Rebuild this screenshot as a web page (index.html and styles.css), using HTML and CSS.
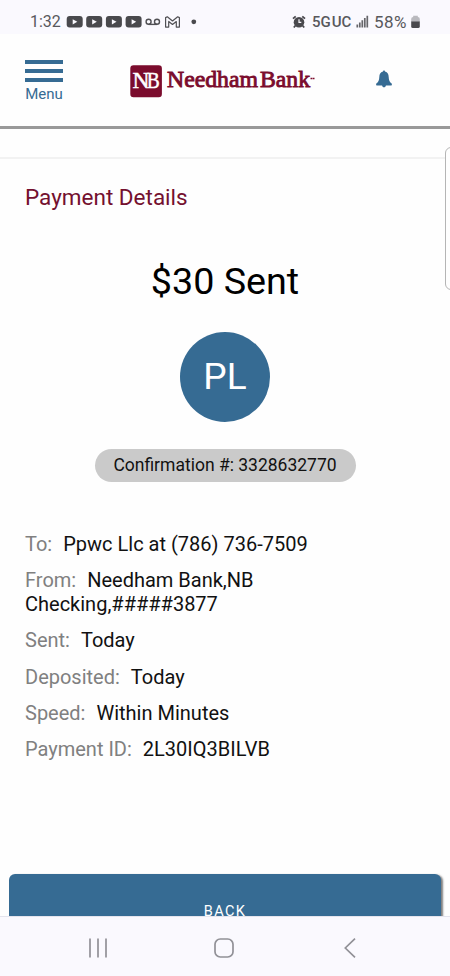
FILE: index.html
```html
<!DOCTYPE html>
<html lang="en">
<head>
  <meta charset="UTF-8" />
  <meta name="viewport" content="width=device-width, initial-scale=1" />
  <title>Payment Details</title>
  <link rel="stylesheet" href="styles.css">
</head>
<body>
  <div class="status-bar">
    <span class="clock">1:32</span>
    <svg class="notifications" width="132" height="14" viewBox="0 0 132 14">
      <defs>
        <g id="video">
          <rect width="16" height="11.6" rx="3" fill="#49494d" />
          <path d="M6 3.2l4.6 2.6L6 8.4z" fill="#faf9fe" />
        </g>
      </defs>
      <use href="#video" x="0.7" y="1" />
      <use href="#video" x="20.2" y="1" />
      <use href="#video" x="39.9" y="1" />
      <use href="#video" x="59.6" y="1" />
      <g fill="none" stroke="#505054" stroke-width="1.4">
        <circle cx="82.6" cy="6.8" r="2.5" />
        <circle cx="91" cy="6.8" r="2.5" />
        <path d="M82.6 9.4H91" />
        <path d="M99.6 12.1V2.6L101.3 1.8L106.5 6L111.7 1.8L113.4 2.6V12.1H110.3V6.5L106.5 9.4L102.7 6.5V12.1Z" stroke-width="1.2" stroke-linejoin="round" />
      </g>
      <circle cx="127.8" cy="6.8" r="2.4" fill="#49494d" />
    </svg>
    <svg class="alarm" width="14" height="14" viewBox="0 0 14 14">
      <path d="M1 3.7L3.7 1.3M10.3 1.3L13 3.7M3.5 10.5L1.8 12.5M10.5 10.5L12.2 12.5" stroke="#49494d" stroke-width="1.8" />
      <circle cx="7" cy="7.2" r="5.3" fill="#49494d" />
      <path d="M7 4.2V7.3H9.3" fill="none" stroke="#faf9fe" stroke-width="1.2" />
    </svg>
    <span class="network">5G<span>UC</span></span>
    <svg class="signal" width="13" height="13" viewBox="0 0 13 13">
      <path d="M1.3 12.5V9.6M3.8 12.5V7.5M6.3 12.5V5.2M8.8 12.5V3M11.3 12.5V.7" stroke="#66666a" stroke-width="1.7" />
    </svg>
    <span class="percent">58%</span>
    <svg class="battery" width="9" height="14" viewBox="0 0 9 14">
      <path d="M2.2 2V.8H6.8V2Q8.8 2 8.8 4V7H.2V4Q.2 2 2.2 2Z" fill="#b9b9be" />
      <path d="M.2 6.5H8.8V11.4Q8.8 13 7.2 13H1.8Q.2 13 .2 11.4Z" fill="#49494d" />
    </svg>
  </div>

  <header class="header">
    <div class="menu">
      <div class="menu-lines"><i></i><i></i><i></i></div>
      <span>Menu</span>
    </div>
    <svg class="logo" width="188" height="36" viewBox="0 0 188 36">
      <rect x="1.3" y="2.2" width="31.6" height="32" rx="3.2" fill="#7b0c2d" />
      <g font-family="'Liberation Serif', serif">
        <g fill="#fff" stroke="#fff" stroke-width=".5" font-size="23">
          <text x="3.6" y="24.8" textLength="17" lengthAdjust="spacingAndGlyphs">N</text>
          <text x="17.8" y="24.8" textLength="13" lengthAdjust="spacingAndGlyphs">B</text>
        </g>
        <g fill="#7b0c2d" stroke="#7b0c2d" stroke-width=".9" font-size="24">
          <text x="38" y="24.4" textLength="91" lengthAdjust="spacingAndGlyphs">Needham</text>
          <text x="131" y="24.4" textLength="50" lengthAdjust="spacingAndGlyphs">Bank</text>
        </g>
      </g>
      <path d="M181.5 15.6H185.5" stroke="#7b0c2d" stroke-width="1.5" stroke-dasharray="1.8 .4" />
    </svg>
    <svg class="bell" width="18" height="18" viewBox="0 0 18 18">
      <path d="M9 .4C9.7.4 10 .9 10 1.6C12.7 2.2 13.6 4.4 13.7 7C13.8 10.2 14.5 11.8 16.4 13.3C17.2 14 17 15.4 16.2 15.4H1.8C1 15.4.8 14 1.6 13.3C3.5 11.8 4.2 10.2 4.3 7C4.4 4.4 5.3 2.2 8 1.6C8 .9 8.3.4 9 .4ZM7 15H11C10.8 18.1 7.2 18.1 7 15Z" fill="#366b93" />
    </svg>
  </header>

  <main class="content">
    <div class="edge-handle"></div>
    <section class="details">
      <h1>Payment Details</h1>
      <p class="amount">$30 Sent</p>
      <div class="avatar">PL</div>
      <div class="confirmation">Confirmation #: 3328632770</div>
      <ul class="info">
        <li><span>To:</span>Ppwc Llc at (786) 736-7509</li>
        <li><span>From:</span>Needham Bank,NB<br>Checking,#####3877</li>
        <li><span>Sent:</span>Today</li>
        <li><span>Deposited:</span>Today</li>
        <li><span>Speed:</span>Within Minutes</li>
        <li><span>Payment ID:</span>2L30IQ3BILVB</li>
      </ul>
    </section>
    <button class="back">BACK</button>
  </main>

  <nav class="nav-bar">
    <svg width="20" height="20" viewBox="0 0 20 20">
      <path d="M2 .5V19.5M10 .5V19.5M18 .5V19.5" stroke="#919197" stroke-width="1.7" />
    </svg>
    <svg width="20" height="20" viewBox="0 0 20 20">
      <rect x="1" y="1" width="18" height="18" rx="5.3" fill="none" stroke="#919197" stroke-width="1.7" />
    </svg>
    <svg width="12" height="20" viewBox="0 0 12 20">
      <path d="M11 .7L1.3 10L11 19.3" fill="none" stroke="#919197" stroke-width="1.7" />
    </svg>
  </nav>
</body>
</html>
```
FILE: styles.css
```css
* {
  box-sizing: border-box;
}
body {
  margin: 0;
  height: 976px;
  display: flex;
  flex-direction: column;
  overflow: hidden;
  font-family: Roboto, sans-serif;
  background: #fefefe;
  color: #111;
}
svg {
  display: block;
  flex: none;
}
.status-bar {
  flex: none;
  display: flex;
  align-items: center;
  height: 34px;
  padding: 9px 29px 0 30px;
  background: #faf9fe;
  color: #58585c;
  font-size: 16px;
  line-height: 24px;
}
.clock {
  width: 36px;
}
.alarm {
  margin-left: 94px;
}
.network {
  margin-left: 6px;
  width: 44px;
  font-size: 15px;
  font-weight: 500;
}
.network span {
  margin-left: 1px;
}
.percent {
  margin-left: 5px;
  width: 37px;
  font-size: 17px;
  letter-spacing: 0.5px;
}
.header {
  flex: none;
  display: flex;
  align-items: flex-start;
  height: 95px;
  padding: 26px 25px 0;
  border-bottom: 3px solid #999;
}
.menu {
  width: 38px;
  color: #366b93;
  font-size: 15px;
  line-height: 18px;
  text-align: center;
}
.menu-lines {
  display: flex;
  flex-direction: column;
  gap: 5px;
  margin-bottom: 3px;
}
.menu-lines i {
  height: 4px;
  background: #366b93;
}
.logo {
  margin: 3px 0 0 66px;
}
.bell {
  margin: 10px 0 0 58px;
}
.content {
  position: relative;
  flex: 1;
  min-height: 0;
  padding-top: 28px;
  overflow: hidden;
}
.edge-handle {
  position: absolute;
  top: 18px;
  right: -10px;
  width: 15px;
  height: 143px;
  border: 1px solid #b5b5b5;
  border-radius: 6px;
  background: #fefefe;
}
.details {
  display: flex;
  flex-direction: column;
  align-items: center;
  padding: 24px 25px 0;
  border-top: 2px solid #f2f2f2;
}
h1 {
  align-self: flex-start;
  margin: 0;
  color: #74102f;
  font-size: 22.5px;
  font-weight: 400;
  line-height: 28px;
}
.amount {
  margin: 46px 0 27px;
  color: #000;
  font-size: 37.7px;
  line-height: 48px;
}
.avatar {
  width: 90px;
  height: 90px;
  border-radius: 50%;
  background: #366b93;
  color: #fff;
  font-size: 37px;
  line-height: 89px;
  text-align: center;
}
.confirmation {
  margin-top: 27px;
  width: 261px;
  height: 33px;
  border-radius: 17px;
  background: #cacaca;
  font-size: 17.5px;
  line-height: 32px;
  text-align: center;
}
.info {
  align-self: stretch;
  margin: 50px 0 0;
  padding: 0;
  list-style: none;
  font-size: 20px;
  line-height: 24px;
}
.info li {
  margin-bottom: 12.2px;
}
.info span {
  margin-right: 11px;
  color: #808080;
}
.back {
  display: block;
  width: 432px;
  height: 74px;
  margin: 101px 0 0 9px;
  padding: 0;
  border: none;
  border-radius: 6px;
  background: #366b93;
  box-shadow: 2px 1px 2px rgba(0, 0, 0, 0.5);
  color: #fff;
  font-family: inherit;
  font-size: 14.5px;
  letter-spacing: 1.4px;
}
.nav-bar {
  position: relative;
  flex: none;
  display: flex;
  align-items: center;
  height: 60px;
  padding: 2px 0 0 88px;
  border-top: 1px solid #e4e4ed;
  background: #faf9fe;
}
.nav-bar svg:nth-child(2) {
  margin-left: 106px;
}
.nav-bar svg:nth-child(3) {
  margin-left: 110px;
}
```
